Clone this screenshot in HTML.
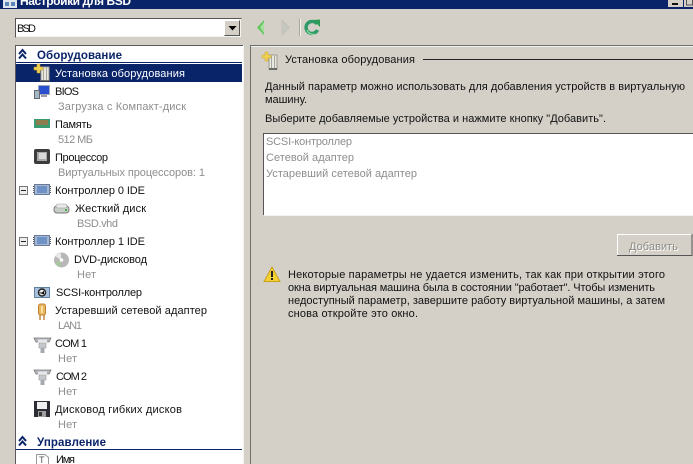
<!DOCTYPE html>
<html><head><meta charset="utf-8"><style>
html,body{margin:0;padding:0;background:#d4d0c8;overflow:hidden}
svg{display:block}
text{font-family:"Liberation Sans",sans-serif;font-size:11px;fill:#111}
.g{fill:#8e8e8e}
.b{font-weight:bold;fill:#0a246a;font-size:11.5px}
</style></head><body>
<svg width="693" height="464" viewBox="0 0 693 464" xmlns="http://www.w3.org/2000/svg">
<defs>
<g id="com"><path d="M0 1h17l-2 4h-13z" fill="#b4b6bc" stroke="#777" stroke-width=".8"/><path d="M4 2.500h9v3h-9z" fill="#e6e8ec"/><path d="M5 6h7v5h-7z" fill="#c4c7cc" stroke="#999" stroke-width=".6"/><rect x="6.500" y="11" width="4" height="5" fill="#a4a9b0"/></g>
<g id="ctl"><rect x=".5" y=".5" width="15" height="10" fill="#a4b8d4" stroke="#6a7a98"/><rect x="3" y="2" width="10" height="7" fill="#6f92c6"/><path d="M-.5 2v7M16.500 2v7" stroke="#555" stroke-width="1" stroke-dasharray="1 1"/></g>
<g id="minus"><rect x=".5" y=".5" width="8" height="8" fill="#eee" stroke="#777"/><path d="M2 4.500h5" stroke="#222"/></g>
<g id="chev"><path d="M0 5l3.500-4 3.500 4M0 9.500l3.500-4 3.500 4" fill="none" stroke="#0a246a" stroke-width="2"/></g>
<g id="hw"><path d="M7 3h8v14h-8z" fill="#e8e8e0" stroke="#9a9a90"/><path d="M9.500 4v12M12.500 4v12" stroke="#a6a69c"/><path d="M7 17h8" stroke="#444" stroke-width="1.500"/><path d="M3 0h3v3h3v3h-3v3h-3v-3h-3v-3h3z" fill="#f0d050" stroke="#c8a030" stroke-width=".5"/></g>
</defs>

<rect width="693" height="464" fill="#d4d0c8"/>
<!-- title bar -->
<rect width="693" height="9" fill="#0a246a"/>
<rect x="3" y="0" width="14" height="8" fill="#dfe6ee"/><rect x="5" y="2" width="4" height="4" fill="#5c86b8"/><rect x="11" y="2" width="4" height="4" fill="#5c86b8"/>
<text x="20" y="5" textLength="111" style="font-weight:bold;font-size:12px;fill:#fff">Настройки для BSD</text>
<rect x="668" y="0" width="15" height="7" fill="#d4d0c8"/><rect x="672" y="3" width="6" height="2" fill="#111"/>
<rect x="684" y="0" width="9" height="7" fill="#d4d0c8"/><rect x="686.500" y="-1" width="6" height="6" fill="none" stroke="#555"/>

<!-- combo -->
<rect x="15" y="18" width="226" height="19" fill="#fff"/>
<path d="M15 37V18H241" fill="none" stroke="#555" stroke-width="1" transform="translate(.5 .5)"/>
<path d="M16 36.500H240.500V19" fill="none" stroke="#f4f4f0"/>
<rect x="224" y="20" width="16" height="16" fill="#d4d0c8"/>
<path d="M224.500 35.500V20.500H239.500" fill="none" stroke="#fff"/><path d="M224.500 35.500H239.500V20.500" fill="none" stroke="#555"/>
<path d="M228.500 26h8l-4 4.500z" fill="#000"/>
<text x="17" y="32" textLength="19">BSD</text>

<!-- nav -->
<path d="M264 20v15l-7-7.500z" fill="#62c45c"/><path d="M264 22v11l-4-5.500z" fill="#a4e09c"/>
<path d="M282 20v15l7.500-7.500z" fill="#c6c6c0" stroke="#bcbcb4" stroke-width=".6"/>
<rect x="299" y="19" width="1" height="17" fill="#a8a8a0"/><rect x="300" y="19" width="1" height="17" fill="#f2f2ee"/>
<path d="M317 24a6 6 0 1 0 .5 6" fill="none" stroke="#2f9a68" stroke-width="3.400"/><path d="M313 20l7-.5v7.500z" fill="#2f9a58"/><path d="M307 30a7 7 0 0 0 9 4" fill="none" stroke="#8fdca0" stroke-width="1.200"/>

<!-- left tree -->
<rect x="15" y="45" width="228" height="419" fill="#fff"/>
<path d="M15.500 464V45.500H243" fill="none" stroke="#5a5a5a"/>
<rect x="243" y="45" width="1" height="419" fill="#f4f4f0"/>
<use href="#chev" x="19" y="49"/>
<text class="b" x="37" y="59" textLength="85">Оборудование</text>
<rect x="16" y="62" width="226" height="1" fill="#0a246a"/>
<rect x="16" y="64" width="226" height="18" fill="#0a246a"/>
<use href="#hw" x="34" y="64"/>
<text x="55" y="77" textLength="130" style="fill:#fff">Установка оборудования</text>

<!-- BIOS -->
<rect x="38.500" y="85.500" width="11" height="9" fill="#2a50d0" stroke="#a4aab8"/><rect x="41" y="95" width="6" height="2" fill="#99a"/><rect x="34.500" y="90.500" width="5" height="8" fill="#a4b8c4" stroke="#667"/>
<text x="55" y="95" textLength="24">BIOS</text>
<text class="g" x="58" y="110" textLength="128">Загрузка с Компакт-диск</text>
<!-- mem -->
<rect x="34" y="119" width="16" height="9" fill="#3a9a70"/><rect x="36" y="120" width="12" height="5" fill="#c8b060"/><path d="M37 120v5M39 120v5M41 120v5M43 120v5M45 120v5M47 120v5" stroke="#333" stroke-width=".8"/>
<text x="55" y="128" textLength="37">Память</text>
<text class="g" x="58" y="143" textLength="35">512 МБ</text>
<!-- cpu -->
<rect x="34" y="149" width="16" height="15" fill="#3c3c3c" rx="2"/><rect x="37" y="152" width="10" height="9" fill="#a8a8a8"/><rect x="39" y="153" width="7" height="6" fill="#d8d8d8"/>
<text x="55" y="161" textLength="53">Процессор</text>
<text class="g" x="58" y="176" textLength="147">Виртуальных процессоров: 1</text>
<!-- ide 0 -->
<use href="#minus" x="19" y="186"/><use href="#ctl" x="34" y="184"/>
<text x="55" y="194" textLength="90">Контроллер 0 IDE</text>
<rect x="54" y="206" width="15" height="7" rx="3" fill="#c8cfc8" stroke="#777"/><rect x="56" y="204" width="11" height="4" rx="2" fill="#e8e8e8" stroke="#999" stroke-width=".6"/><rect x="65" y="209" width="2" height="2" fill="#4a4"/>
<text x="75" y="212" textLength="71">Жесткий диск</text>
<text class="g" x="77" y="227" textLength="41">BSD.vhd</text>
<!-- ide 1 -->
<use href="#minus" x="19" y="237"/><use href="#ctl" x="34" y="235"/>
<text x="55" y="245" textLength="90">Контроллер 1 IDE</text>
<circle cx="61.500" cy="260" r="7.500" fill="#b8b8b8"/><path d="M55 256a8 8 0 0 1 6-3l0 7z" fill="#e8e8e8"/><path d="M61 260l-6 3a8 8 0 0 0 5 4z" fill="#a8c8a0"/><circle cx="61.500" cy="260" r="1.800" fill="#fff"/>
<text x="74" y="263" textLength="73">DVD-дисковод</text>
<text class="g" x="77" y="278" textLength="19">Нет</text>
<!-- scsi -->
<rect x="34.500" y="287.500" width="15" height="10" fill="#a8c0dc" stroke="#6080a0"/><circle cx="42" cy="292.500" r="3.500" fill="#eee" stroke="#222" stroke-width="1.400"/><path d="M38 292.500h4l2-2v4z" fill="#111"/>
<text x="56" y="296" textLength="86">SCSI-контроллер</text>
<!-- net -->
<rect x="38.500" y="304" width="7" height="11" rx="2" fill="#e8b860" stroke="#c08030"/><rect x="41" y="306" width="2" height="7" fill="#fbe0a0"/><path d="M40 315v5M44 315v5" stroke="#c08030" stroke-width="1.400"/>
<text x="55" y="314" textLength="152">Устаревший сетевой адаптер</text>
<text class="g" x="58" y="329" textLength="24">LAN1</text>
<!-- com -->
<use href="#com" x="34" y="337"/>
<text x="55" y="347" textLength="32">COM 1</text>
<text class="g" x="58" y="362" textLength="19">Нет</text>
<use href="#com" x="34" y="369"/>
<text x="56" y="380" textLength="31">COM 2</text>
<text class="g" x="58" y="395" textLength="19">Нет</text>
<!-- floppy -->
<rect x="34" y="401" width="16" height="16" fill="#2c2c34"/><rect x="37" y="402" width="10" height="7" fill="#f0f0f0"/><rect x="38" y="411" width="8" height="6" fill="#a0a0a0"/><rect x="39" y="412" width="3" height="4" fill="#333"/>
<text x="55" y="413" textLength="127">Дисковод гибких дисков</text>
<text class="g" x="58" y="428" textLength="19">Нет</text>
<!-- manage -->
<use href="#chev" x="19" y="436"/>
<text class="b" x="37" y="446" textLength="69">Управление</text>
<rect x="16" y="449" width="226" height="1" fill="#0a246a"/>
<path d="M36.500 464V454.500H45l3.500 3V464" fill="#fff" stroke="#999"/><text x="39" y="463" style="font-size:9px;fill:#555">T</text>
<text x="56" y="463" textLength="19">Имя</text>

<!-- right panel -->
<rect x="250" y="45" width="443" height="1" fill="#6e6e6a"/>
<rect x="250" y="46" width="443" height="1" fill="#f2f2ee"/>
<rect x="250" y="45" width="1" height="419" fill="#6e6e6a"/>
<use href="#hw" x="262" y="52"/>
<text x="285" y="63" textLength="130">Установка оборудования</text>
<rect x="423" y="59" width="270" height="1" fill="#222"/>
<text x="265" y="90" textLength="420">Данный параметр можно использовать для добавления устройств в виртуальную</text>
<text x="265" y="103" textLength="42">машину.</text>
<text x="265" y="122" textLength="341">Выберите добавляемые устройства и нажмите кнопку "Добавить".</text>

<!-- list -->
<rect x="263" y="133" width="430" height="82" fill="#fff"/>
<path d="M263.500 215V133.500H693" fill="none" stroke="#555"/>
<rect x="264" y="215" width="429" height="1" fill="#f2f2ee"/>
<text class="g" x="266" y="145" textLength="86">SCSI-контроллер</text>
<text class="g" x="266" y="161" textLength="88">Сетевой адаптер</text>
<text class="g" x="266" y="177" textLength="151">Устаревший сетевой адаптер</text>

<!-- button -->
<rect x="617" y="234" width="75" height="22" fill="#d4d0c8"/>
<path d="M617.500 256V234.500H692" fill="none" stroke="#fff"/><path d="M617 255.500H692V234" fill="none" stroke="#555"/>
<text x="630" y="251" textLength="49" style="fill:#fff">Добавить</text>
<text x="629" y="250" textLength="49" style="fill:#8e8c86">Добавить</text>

<!-- warning -->
<path d="M272 267l8 14.500h-16z" fill="#f6d030" stroke="#c8a020"/><rect x="271" y="271" width="2" height="6" fill="#222"/><rect x="271" y="278" width="2" height="2" fill="#222"/>
<text x="288" y="278" textLength="377">Некоторые параметры не удается изменить, так как при открытии этого</text>
<text x="288" y="291" textLength="367">окна виртуальная машина была в состоянии "работает". Чтобы изменить</text>
<text x="288" y="304" textLength="377">недоступный параметр, завершите работу виртуальной машины, а затем</text>
<text x="288" y="317" textLength="130">снова откройте это окно.</text>
</svg>
</body></html>
